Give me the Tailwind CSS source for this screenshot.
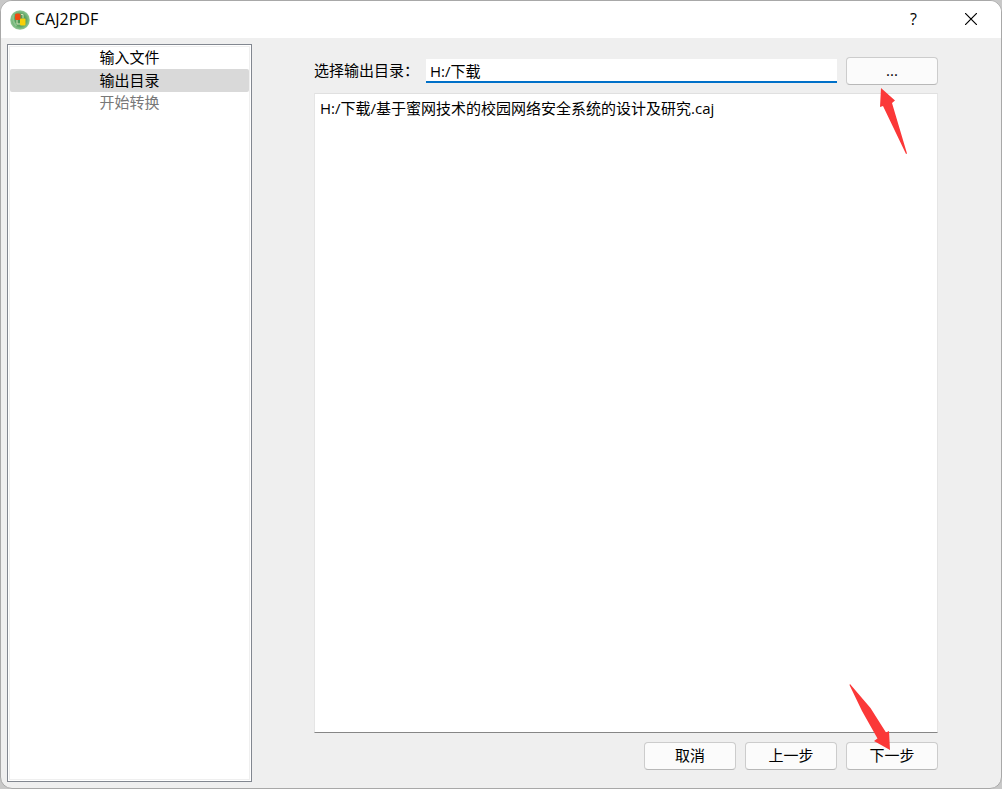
<!DOCTYPE html>
<html lang="zh-CN">
<head>
    <meta charset="UTF-8">
    <meta name="viewport" content="width=device-width, initial-scale=1.0">
    <title>CAJ2PDF</title>
    <script src="https://cdn.jsdelivr.net/npm/@tailwindcss/browser@4"></script>
</head>
<body class="bg-[#c8c8c8] font-['Open_Sans','Noto_Sans_CJK_SC',sans-serif] text-[15px] leading-5 text-black">
    <div class="flex min-h-screen flex-col overflow-hidden rounded-xl border border-[#a8a8a8] bg-[#efefef]">
        <!-- Title bar -->
        <header class="flex h-[37px] items-center bg-white pl-[9px] pr-6">
            <svg class="mr-[5px] size-5" viewBox="0 0 20 20">
                <defs>
                    <radialGradient id="disc" cx="50%" cy="50%" r="50%">
                        <stop offset="0" stop-color="#3f8f4c"/>
                        <stop offset="0.65" stop-color="#5fa766"/>
                        <stop offset="1" stop-color="#93c896"/>
                    </radialGradient>
                </defs>
                <circle cx="10" cy="10" r="9.8" fill="url(#disc)"/>
                <path d="M3.500 5c-1 4 0 8 3 11" fill="none" stroke="#8cc48f" stroke-width="2"/>
                <path d="M7 10v4h3M11 4.500h2v4" fill="none" stroke="#d5dfb8" stroke-width="1"/>
                <rect x="5" y="3.500" width="5.500" height="6.500" rx="1.500" fill="#f04a10"/>
                <rect x="10" y="8.500" width="5.500" height="7" rx="1" fill="#f8d008"/>
            </svg>
            <h1 class="pb-0.5 text-base">CAJ2PDF</h1>
            <button type="button" aria-label="帮助" class="ml-auto mr-12 pb-0.5 text-base">?</button>
            <button type="button" aria-label="关闭" class="pb-0.5">
                <svg class="size-3" viewBox="0 0 12 12" fill="none" stroke="#000" stroke-width="1.200">
                    <path d="M0 0l12 12M12 0L0 12"/>
                </svg>
            </button>
        </header>

        <div class="flex flex-1 gap-[62px] pb-1.5 pl-1.5 pr-[63px] pt-1.5">
            <!-- Steps -->
            <nav class="w-[245px] shrink-0 border border-[#828790] bg-white p-px">
                <ol class="h-full border border-[#efefef] text-center">
                    <li class="h-[22px] leading-5">输入文件</li>
                    <li class="h-[23px] rounded-xs bg-[#d9d9d9] leading-[22px]" aria-current="step">输出目录</li>
                    <li class="h-[22px] leading-5 text-[#787878]">开始转换</li>
                </ol>
            </nav>

            <!-- Output directory page -->
            <main class="flex min-w-0 flex-1 flex-col pb-3 pt-[13px]">
                <div class="flex items-center">
                    <label for="outdir" class="w-28 shrink-0 pb-0.5">选择输出目录：</label>
                    <input id="outdir" type="text" value="H:/下载" class="h-6 min-w-0 flex-1 border-b-2 border-[#0070c8] bg-white px-1 outline-none">
                    <div class="relative ml-[9px]">
                        <button type="button" class="block h-7 w-[92px] rounded border border-[#cccccc] border-b-[#b8b8b8] bg-[#fbfbfb] pb-0.5">...</button>
                        <svg class="pointer-events-none absolute left-[34px] top-[31px] h-[66px] w-7" viewBox="0 0 28 66">
                            <path d="M1 0L15 12.500L12 15L27 65.500L26 66L3 18L0 19Z" fill="#fb3838"/>
                        </svg>
                    </div>
                </div>
                <ul class="mt-2 flex-1 border border-x-[#e5e5e5] border-t-[#e0e0e0] border-b-[#868686] bg-white px-[5px] py-1">
                    <li>H:/下载/基于蜜网技术的校园网络安全系统的设计及研究.caj</li>
                </ul>
                <div class="mt-[9px] flex justify-end gap-[9px]">
                    <button type="button" class="h-7 w-[92px] rounded border border-[#cccccc] border-b-[#b8b8b8] bg-[#fbfbfb] pb-0.5">取消</button>
                    <button type="button" class="h-7 w-[92px] rounded border border-[#cccccc] border-b-[#b8b8b8] bg-[#fbfbfb] pb-0.5">上一步</button>
                    <div class="relative">
                        <button type="button" class="block h-7 w-[92px] rounded border border-[#cccccc] border-b-[#b8b8b8] bg-[#fbfbfb] pb-0.5">下一步</button>
                        <svg class="pointer-events-none absolute bottom-5 left-[3px] h-[66px] w-[42px]" viewBox="0 0 42 66">
                            <path d="M1 0L21.500 24L37 48.500L40 47L41 66L25 57L28.500 54.500L13 27L0.500 1Z" fill="#fb3838"/>
                        </svg>
                    </div>
                </div>
            </main>
        </div>
    </div>
</body>
</html>
